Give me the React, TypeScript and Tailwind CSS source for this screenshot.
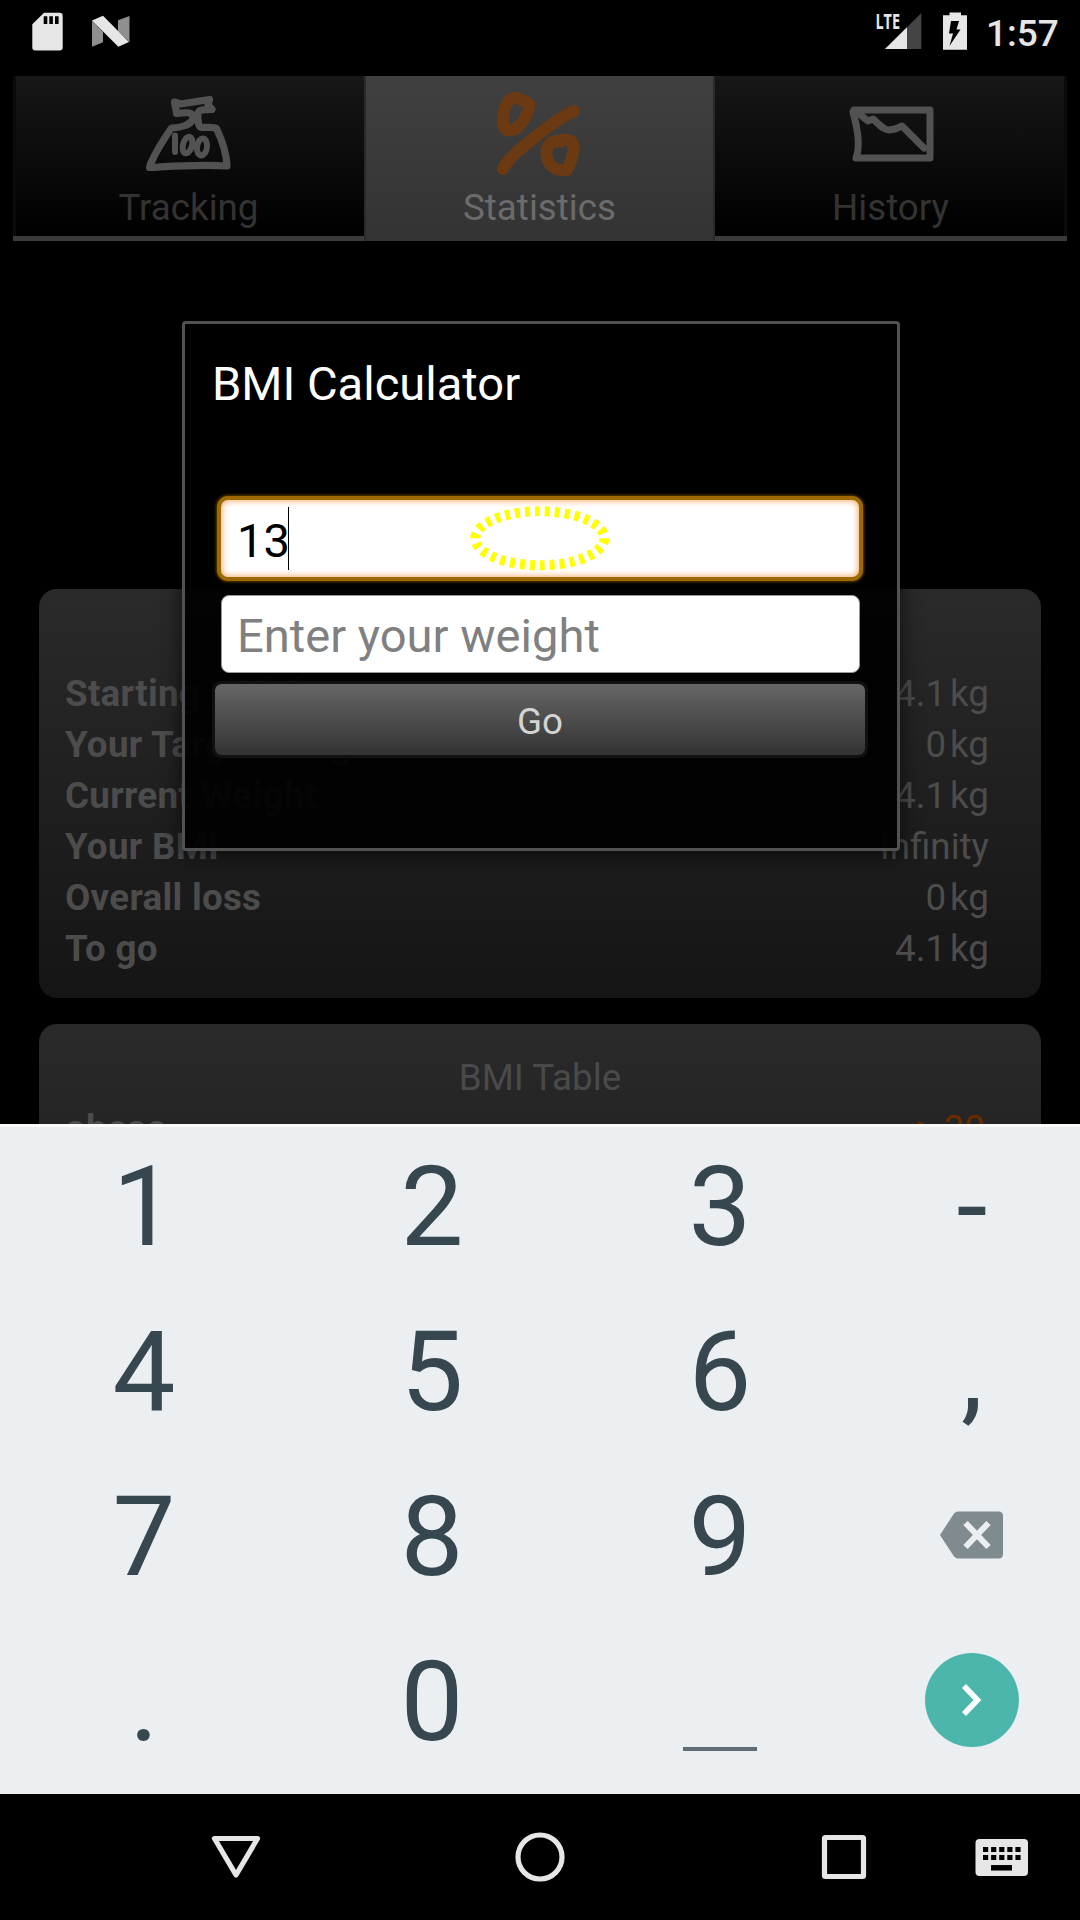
import React from "react";

const rows: [string, string, string][] = [
  ["Starting Weight", "4.1", "kg"],
  ["Your Target Weight", "0", "kg"],
  ["Current Weight", "4.1", "kg"],
  ["Your BMI", "Infinity", ""],
  ["Overall loss", "0", "kg"],
  ["To go", "4.1", "kg"],
];

function StatusBar() {
  return (
    <div className="flex h-[76px] shrink-0 items-start justify-between">
      <div className="flex">
        <svg width="140" height="76" viewBox="0 0 140 76">
          <path d="M44 12.7H59.5Q62.7 12.7 62.7 16V47.3Q62.7 50.5 59.5 50.5H35.5Q32.3 50.5 32.3 47.3V24.3Z" fill="#e6e6e6" />
          <path d="M43.7 16.3h3.6v7.7h-3.6zM49.3 16.3h3.6v7.7h-3.6zM55 16.3h3.6v7.7h-3.6z" fill="#000" />
          <path d="M92 20.5L103 32V42.3L92 46.7Z" fill="#8f8f8f" />
          <path d="M118 20.3L129.5 16V42L118 31Z" fill="#8f8f8f" />
          <path d="M92 20.5L103 15.8L129 42L118.3 46.8Z" fill="#e6e6e6" />
        </svg>
      </div>
      <div className="flex">
        <svg width="110" height="76" viewBox="870 0 110 76">
          <text x="875.5" y="28.8" textLength="24.5" lengthAdjust="spacingAndGlyphs" className="font-['Open_Sans'] text-[21.5px] font-bold" fill="#e6e6e6">LTE</text>
          <path d="M921.3 13V49H885Z" fill="#444" />
          <path d="M907 27.2V49H885Z" fill="#e6e6e6" />
          <path d="M943 15.3H949.5V12.5H961V15.3H967V49.8H943Z" fill="#e6e6e6" />
          <path d="M951 21H959L956.5 29.5H960.5L949.5 46L953 33.5H949Z" fill="#000" />
        </svg>
        <span className="mt-[12px] w-[100px] pl-[6px] text-[37px] leading-[44px] font-medium text-[#e6e6e6]">1:57</span>
      </div>
    </div>
  );
}

function ScaleIcon() {
  return (
    <svg width="88" height="84" viewBox="144.500 94 88 84" fill="none" stroke="#525252" strokeWidth="7.200" strokeLinecap="round" strokeLinejoin="round">
      <path d="M149 167.500L150 164C156 150 164 138 171 128C180 128 190 125 192.500 119C193 112 188 112 176 113.500L174 102L180 104L209 99.500L207.500 105L211.500 109.500C203 110 199 109 197.500 113C197 120 198 127 201 127.500C207 127.500 213 126.500 216 128.500C221 139 226 152 226.500 166C200 164 176 166 149 167.500Z" />
      <path d="M174.500 135.500V152" strokeWidth="6" />
      <ellipse cx="187" cy="145" rx="4.500" ry="8.500" transform="rotate(15 187 145)" strokeWidth="6" />
      <ellipse cx="201.500" cy="147" rx="5" ry="8.500" transform="rotate(8 201.500 147)" strokeWidth="6" />
    </svg>
  );
}

function PercentIcon() {
  return (
    <svg width="88" height="88" viewBox="496 90 88 88" fill="none" stroke="#6b3a12" strokeWidth="12" strokeLinecap="round" strokeLinejoin="round">
      <path d="M513 98C505 101 502 115 503 124C504 132 511 132 518 127C526 119 530 109 529 104C527 101 523 102 520 99C518 98 515 97.500 513 98Z" />
      <path d="M574 111C557 118 538 135 524 146C514 154 506 162 503 169" />
      <path d="M556 141C548 142 545 150 547 158C549 165 555 170 562 170H567C571 163 574 152 573.500 145C572 139 567 139.500 563 139.500Q560 143 556 141Z" />
    </svg>
  );
}

function HistoryIcon() {
  return (
    <svg width="88" height="66" viewBox="846 100 88 66" fill="none" stroke="#525252" strokeWidth="7" strokeLinecap="round" strokeLinejoin="round">
      <path d="M853 110H929V158H855C859 148 857 130 852 112" />
      <path d="M856 112L867 121L872 119C880 126 883 130 888 130L894 129L901 126L923 148" />
    </svg>
  );
}

function Tabs() {
  return (
    <div className="mx-[13px] flex h-[165px] shrink-0 border-b-[5px] border-[#3b3b3b] text-[36.75px] leading-[43px]">
      <div className="flex w-[351px] flex-col items-center border-l-[3px] border-[#0b0b0b] bg-linear-to-b/srgb from-[#171717] to-black pt-[18px] pr-[3px]">
        <ScaleIcon />
        <span className="mt-[8px] text-[#333]">Tracking</span>
      </div>
      <div className="-mb-[5px] flex w-[351px] flex-col items-center border-x-2 border-[#2a2a2a] bg-linear-to-b/srgb from-[#404040] to-[#333] pt-[14px]">
        <PercentIcon />
        <span className="mt-[8px] text-[#6b6b6b]">Statistics</span>
      </div>
      <div className="flex w-[352px] flex-col items-center border-r-[3px] border-[#0b0b0b] bg-linear-to-b/srgb from-[#171717] to-black pt-[24px] pl-[2px]">
        <HistoryIcon />
        <span className="mt-[20px] text-[#333]">History</span>
      </div>
    </div>
  );
}

function Cards() {
  return (
    <div className="mx-[39px] flex h-[883px] shrink-0 flex-col gap-[26px] overflow-hidden pt-[348px] text-[36.75px] leading-[51px]">
      <div className="h-[409px] shrink-0 rounded-[18px] bg-linear-to-b/srgb from-[#2a2a2a] to-[#151515] pt-[79px] pr-[52px] pl-[26px]">
        {rows.map(([label, value, unit]) => (
          <div key={label} className="flex h-[51px] items-center justify-between text-[#4c4c4c]">
            <span className="font-bold tracking-[0.28px]">{label}</span>
            <span className="flex gap-[4px]">
              <span>{value}</span>
              {unit && <span>{unit}</span>}
            </span>
          </div>
        ))}
      </div>
      <div className="h-[409px] shrink-0 rounded-[18px] bg-linear-to-b/srgb from-[#2a2a2a] to-[#151515] px-[26px] pt-[28px]">
        <div className="text-center text-[#4a4a4a]">BMI Table</div>
        <div className="flex justify-between">
          <span className="font-bold tracking-[0.28px] text-[#4c4c4c]">obese</span>
          <span className="mr-[30px] text-[#6b2b00]">&gt; 30</span>
        </div>
      </div>
    </div>
  );
}

function Dialog() {
  return (
    <div className="absolute top-[321px] left-[182px] flex h-[530px] w-[718px] flex-col rounded-[4px] border-[3px] border-[#525252] bg-black/93 shadow-[0_3px_18px_3px_rgba(0,0,0,0.5)]">
      <h1 className="mt-[32px] ml-[27px] text-[47.1px] leading-[56px] text-white">BMI Calculator</h1>
      <div className="mt-[84px] ml-[32px] flex h-[85px] w-[646px] items-center rounded-[11px] border-[4px] border-[#9c6a00] bg-white pl-[16px] shadow-[0_0_3px_1px_rgba(156,106,0,0.6),inset_0_0_6px_1px_rgba(240,150,70,0.8)]">
        <span className="mt-[5px] text-[47.1px] leading-[56px] text-black">13</span>
        <span className="-ml-[2px] h-[63px] w-px bg-black" />
      </div>
      <div className="mt-[14px] ml-[36px] flex h-[78px] w-[639px] items-center rounded-[8px] border border-[#999] bg-white pl-[15px]">
        <span className="mt-[4px] text-[47.1px] leading-[56px] text-[#808080]">Enter your weight</span>
      </div>
      <div className="mt-[8px] ml-[27px] flex h-[77px] w-[656px] items-center justify-center rounded-[9px] border-[3px] border-[#111] bg-linear-to-b/srgb from-[#666] to-[#333] bg-clip-padding">
        <span className="mt-[3px] text-[36.75px] leading-[43px] text-[#d4d4d4]">Go</span>
      </div>
      <svg className="absolute top-[180px] left-[282px]" width="146" height="72" viewBox="467 504 146 72">
        <ellipse cx="539.800" cy="538.300" rx="64.500" ry="27" fill="none" stroke="#ff0" strokeWidth="10" pathLength="300" strokeDasharray="5 5" />
      </svg>
    </div>
  );
}

function Key({ children }: { children?: React.ReactNode }) {
  return <div className="flex items-center justify-center pb-[5px]">{children}</div>;
}

function Keyboard() {
  return (
    <div className="grid h-[670px] shrink-0 grid-cols-[288px_288px_288px_216px] grid-rows-[165px_165px_165px_165px] border-t-[3px] border-[#fafafa] bg-[#ebeff2] text-[112px] leading-[132px] text-[#37474f]">
      <Key>1</Key><Key>2</Key><Key>3</Key><Key>-</Key>
      <Key>4</Key><Key>5</Key><Key>6</Key><Key>,</Key>
      <Key>7</Key><Key>8</Key><Key>9</Key>
      <Key>
        <svg className="mb-[5px]" width="64" height="48" viewBox="0 0 64 48">
          <path d="M18 0.500H58.500Q63 0.500 63 5V43Q63 47.500 58.500 47.500H18Q16 47.500 14 45.500L0 24L14 2.500Q16 0.500 18 0.500Z" fill="#808b90" />
          <path d="M25.500 12L48.500 36M48.500 12L25.500 36" stroke="#ebeff2" strokeWidth="6" />
        </svg>
      </Key>
      <Key>.</Key><Key>0</Key>
      <Key><span className="mt-[94px] h-[4px] w-[74px] bg-[#616d74]" /></Key>
      <Key>
        <span className="mb-[5px] flex size-[94px] items-center justify-center rounded-full bg-[#4db6ac]">
          <svg width="24" height="34" viewBox="0 0 24 34">
            <path d="M4 3L17.500 17L4 31" fill="none" stroke="#fff" strokeWidth="5.500" />
          </svg>
        </span>
      </Key>
    </div>
  );
}

function NavBar() {
  return (
    <div className="h-[126px] shrink-0">
      <svg width="1080" height="126" viewBox="0 1794 1080 126" fill="none" stroke="#e6e6e6" strokeWidth="5.200" strokeLinejoin="round">
        <path d="M214.500 1838.500H257.500L236 1875Z" />
        <circle cx="540" cy="1857" r="22" />
        <rect x="824.500" y="1837.500" width="39" height="39" rx="1" />
        <rect x="975.500" y="1839" width="52.500" height="37" rx="4" fill="#e6e6e6" stroke="none" />
        <path d="M983 1849.500H1021M983 1857.500H1021" stroke="#000" strokeDasharray="5.200 2.900" />
        <path d="M991 1867.800H1012" stroke="#000" strokeWidth="5.500" />
      </svg>
    </div>
  );
}

export default function App() {
  return (
    <div className="relative flex h-[1920px] w-[1080px] flex-col overflow-hidden bg-black font-[Roboto,sans-serif]">
      <StatusBar />
      <Tabs />
      <Cards />
      <Keyboard />
      <NavBar />
      <Dialog />
    </div>
  );
}
